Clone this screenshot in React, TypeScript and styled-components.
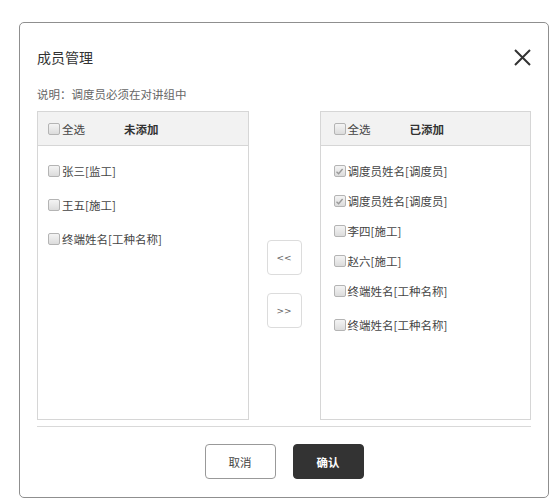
import React from "react";
import styled, { createGlobalStyle } from "styled-components";

const GlobalStyle = createGlobalStyle`
  body {
    margin: 0;
    background: #fff;
    font-family: "Microsoft YaHei", "Noto Sans CJK SC", "Noto Sans", sans-serif;
    color: #333;
  }
`;

const Dialog = styled.div`
  box-sizing: border-box;
  width: 530px;
  height: 476px;
  margin: 22px 0 0 19px;
  border: 1px solid #8f8f8f;
  border-radius: 5px;
  padding: 24px 17px 18px;
  display: flex;
  flex-direction: column;
`;

const Header = styled.div`
  display: flex;
  align-items: center;
  justify-content: space-between;
  height: 20px;
`;

const Title = styled.div`
  font-size: 14px;
  line-height: 20px;
  color: #333;
`;

const CloseBtn = styled.div`
  width: 18px;
  height: 18px;
  display: flex;
  align-items: center;
  justify-content: center;
`;

const Note = styled.div`
  margin-top: 19px;
  font-size: 11.5px;
  line-height: 16px;
  color: #666;
`;

const Transfer = styled.div`
  margin-top: 9px;
  display: flex;
  align-items: flex-start;
`;

const Panel = styled.div`
  box-sizing: border-box;
  width: 212px;
  height: 309px;
  border: 1px solid #d6d6d6;
`;

const PanelHead = styled.div<{ $pad: number }>`
  box-sizing: border-box;
  height: 34px;
  background: #f2f2f2;
  border-bottom: 1px solid #d6d6d6;
  display: flex;
  align-items: center;
  padding-left: ${(p) => p.$pad}px;
  font-size: 11.5px;
  color: #444;
`;

const HeadTitle = styled.span`
  margin-left: 39px;
  font-weight: bold;
  color: #333;
`;

const List = styled.div<{ $pad: number; $top: number }>`
  padding: ${(p) => p.$top}px 0 0 ${(p) => p.$pad}px;
`;

const Item = styled.div<{ $h: number }>`
  height: ${(p) => p.$h}px;
  display: flex;
  align-items: center;
  font-size: 11.5px;
  color: #444;
`;

const Box = styled.span`
  box-sizing: border-box;
  width: 12px;
  height: 12px;
  margin-right: 2px;
  border: 1px solid #b4b4b4;
  border-radius: 2px;
  background: linear-gradient(#f4f4f4, #dcdcdc);
  display: inline-flex;
  align-items: center;
  justify-content: center;
  flex-shrink: 0;
`;

const Arrows = styled.div`
  margin: 129px 18px 0;
  display: flex;
  flex-direction: column;
  gap: 18px;
`;

const ArrowBtn = styled.div`
  box-sizing: border-box;
  width: 35px;
  height: 35px;
  border: 1px solid #dcdcdc;
  border-radius: 4px;
  display: flex;
  align-items: center;
  justify-content: center;
  font-family: "DejaVu Sans", sans-serif;
  font-size: 9px;
  color: #666;
`;

const Divider = styled.div`
  margin-top: 6px;
  height: 1px;
  background: #d9d9d9;
`;

const Footer = styled.div`
  margin-top: 17px;
  display: flex;
  justify-content: center;
  gap: 17px;
`;

const Button = styled.div<{ $primary?: boolean }>`
  box-sizing: border-box;
  width: 71px;
  height: 35px;
  border-radius: 4px;
  border: 1px solid ${(p) => (p.$primary ? "#333" : "#999")};
  background: ${(p) => (p.$primary ? "#333" : "#fff")};
  color: ${(p) => (p.$primary ? "#fff" : "#444")};
  font-weight: ${(p) => (p.$primary ? "bold" : "normal")};
  font-size: 11.5px;
  display: flex;
  align-items: center;
  justify-content: center;
`;

const Check: React.FC<{ checked?: boolean }> = ({ checked }) => (
  <Box>
    {checked && (
      <svg width="9" height="9" viewBox="0 0 9 9">
        <path d="M1.5 4.8 L3.6 6.8 L7.6 2" fill="none" stroke="#9a9a9a" strokeWidth="1.4" />
      </svg>
    )}
  </Box>
);

const leftItems = ["张三[监工]", "王五[施工]", "终端姓名[工种名称]"];
const rightItems = [
  { name: "调度员姓名[调度员]", checked: true, h: 30 },
  { name: "调度员姓名[调度员]", checked: true, h: 30 },
  { name: "李四[施工]", checked: false, h: 30 },
  { name: "赵六[施工]", checked: false, h: 30 },
  { name: "终端姓名[工种名称]", checked: false, h: 30 },
  { name: "终端姓名[工种名称]", checked: false, h: 38 },
];

const App: React.FC = () => {
  return (
    <>
      <GlobalStyle />
      <Dialog>
        <Header>
          <Title>成员管理</Title>
          <CloseBtn>
            <svg width="17" height="17" viewBox="0 0 17 17">
              <path d="M1 1 L16 16 M16 1 L1 16" stroke="#333" strokeWidth="2" />
            </svg>
          </CloseBtn>
        </Header>
        <Note>说明：调度员必须在对讲组中</Note>
        <Transfer>
          <Panel>
            <PanelHead $pad={10}>
              <Check />
              全选
              <HeadTitle>未添加</HeadTitle>
            </PanelHead>
            <List $pad={10} $top={8}>
              {leftItems.map((name, i) => (
                <Item key={i} $h={34}>
                  <Check />
                  {name}
                </Item>
              ))}
            </List>
          </Panel>
          <Arrows>
            <ArrowBtn>&lt;&lt;</ArrowBtn>
            <ArrowBtn>&gt;&gt;</ArrowBtn>
          </Arrows>
          <Panel>
            <PanelHead $pad={13}>
              <Check />
              全选
              <HeadTitle>已添加</HeadTitle>
            </PanelHead>
            <List $pad={13} $top={10}>
              {rightItems.map((it, i) => (
                <Item key={i} $h={it.h}>
                  <Check checked={it.checked} />
                  {it.name}
                </Item>
              ))}
            </List>
          </Panel>
        </Transfer>
        <Divider />
        <Footer>
          <Button>取消</Button>
          <Button $primary>确认</Button>
        </Footer>
      </Dialog>
    </>
  );
};

export default App;
